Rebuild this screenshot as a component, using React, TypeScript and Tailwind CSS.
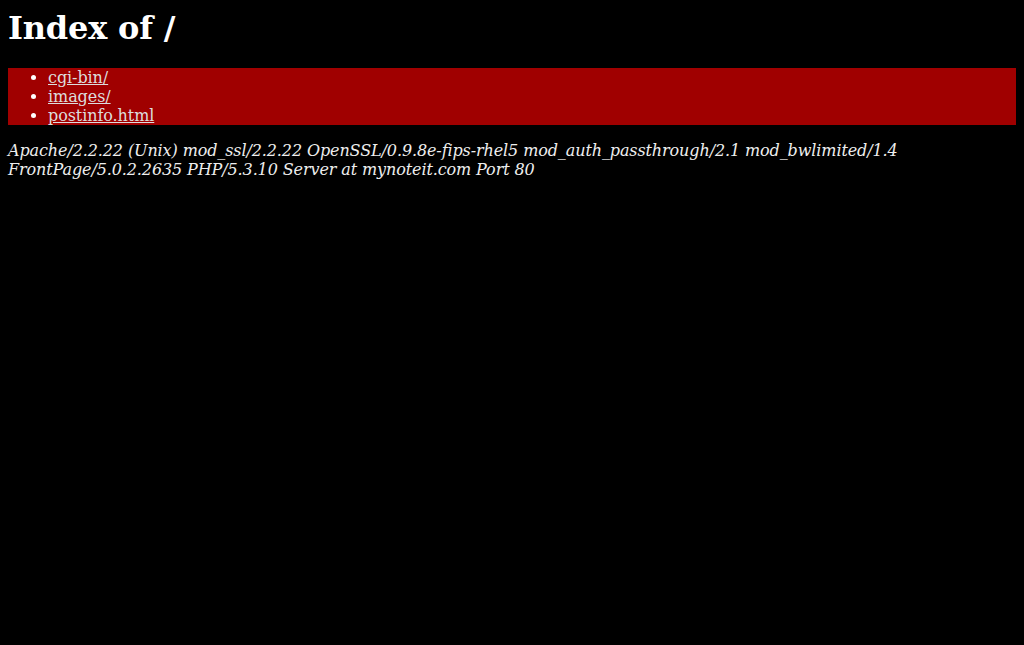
const ENTRIES = ["cgi-bin/", "images/", "postinfo.html"]

export default function App() {
    return (
        <div className="min-h-[645px] bg-black p-2 text-white font-['DejaVu_Serif',serif]">
            {/* Title */}
            <h1 className="m-0 mt-[2px] mb-[21px] text-[32px] font-bold leading-[37px] tracking-[-0.2px]">Index of /</h1>

            {/* Listing */}
            <ul className="m-0 list-disc bg-[#a00000] pl-10 text-base leading-[19px]">
                {ENTRIES.map((name) => (
                    <li key={name}>
                        <a href={name} className="text-[#dddddd] underline tracking-[-0.08px]">
                            {name}
                        </a>
                    </li>
                ))}
            </ul>

            {/* Server signature */}
            <address className="mt-4 text-base italic leading-[19px] tracking-[-0.11px] text-[#eeeeee]">
                Apache/2.2.22 (Unix) mod_ssl/2.2.22 OpenSSL/0.9.8e-fips-rhel5 mod_auth_passthrough/2.1 mod_bwlimited/1.4
                FrontPage/5.0.2.2635 PHP/5.3.10 Server at mynoteit.com Port 80
            </address>
        </div>
    )
}
